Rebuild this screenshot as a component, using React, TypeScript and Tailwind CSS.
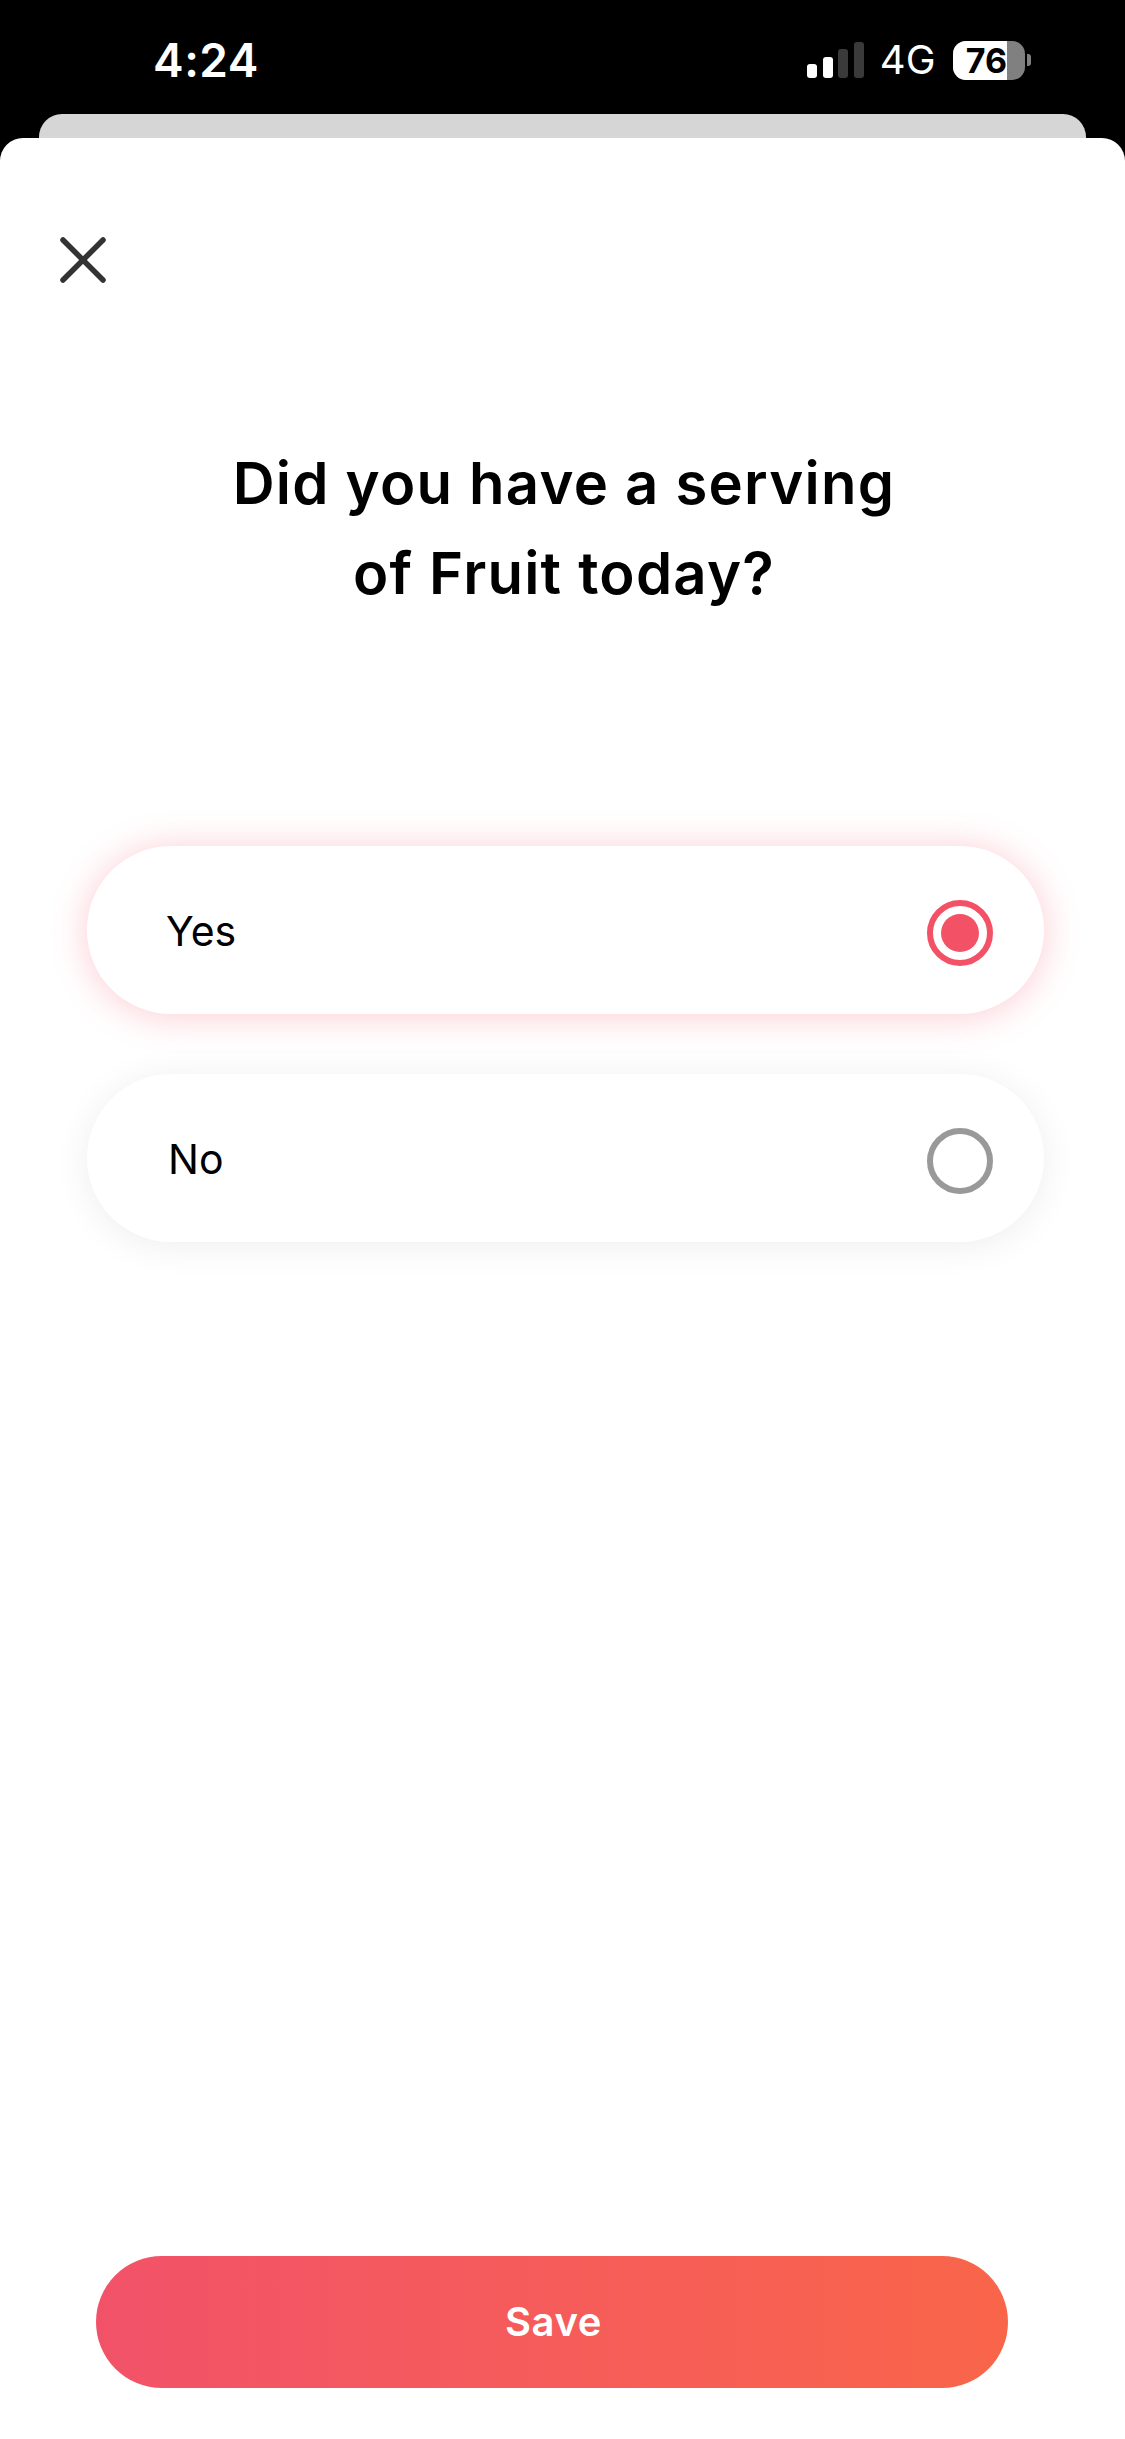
import React from "react";

function Option({ label, selected, textPad }: { label: string; selected: boolean; textPad: string }) {
  return (
    <div
      className={`flex h-[168px] items-center justify-between rounded-[84px] bg-white pr-[51px] ${textPad} ${
        selected ? "shadow-[0_2px_36px_rgba(244,82,102,0.3)]" : "shadow-[0_4px_36px_rgba(0,0,0,0.07)]"
      }`}
    >
      <span className="pt-[2px] text-[41px] leading-[50px] font-normal text-black">{label}</span>
      <span
        className={`flex h-[66px] w-[66px] translate-y-[3px] items-center justify-center rounded-full border-[6px] ${
          selected ? "border-[#f35166]" : "border-[#999999]"
        }`}
      >
        {selected && <span className="h-[38px] w-[38px] rounded-full bg-[#f35166]" />}
      </span>
    </div>
  );
}

export default function App() {
  return (
    <div className="flex h-[2439px] w-[1125px] flex-col overflow-hidden bg-black font-['Inter',sans-serif]">
      {/* Status bar */}
      <div className="flex h-[114px] shrink-0 items-start justify-between pl-[153px] pr-[94px] pt-[32px]">
        <span className="text-[46px] leading-[56px] font-semibold tracking-[0.5px] text-white">4:24</span>
        <div className="flex items-center pt-[8px]">
          <div className="flex h-[36px] items-end gap-[5.5px]">
            <span className="h-[14px] w-[10px] rounded-[3px] bg-white" />
            <span className="h-[21px] w-[10px] rounded-[3px] bg-white" />
            <span className="h-[29px] w-[10px] rounded-[3px] bg-[#3a3a3a]" />
            <span className="h-[36px] w-[10px] rounded-[3px] bg-[#3a3a3a]" />
          </div>
          <span className="ml-[16px] text-[40px] leading-[40px] font-normal text-white">4G</span>
          <div className="ml-[17.5px] flex h-[39px] w-[72px] overflow-hidden rounded-[13px] bg-[#808080]">
            <div className="flex h-full w-[54px] items-center justify-end overflow-hidden bg-white">
              <span className="text-[34px] leading-[39px] font-bold text-black">76</span>
            </div>
          </div>
          <span className="ml-[2px] h-[12px] w-[4px] rounded-r-[3px] bg-[#808080]" />
        </div>
      </div>

      {/* Sheet behind */}
      <div className="mx-[39px] h-[24px] shrink-0 rounded-t-[23px] bg-[#d6d6d6]" />

      {/* Sheet */}
      <div className="flex flex-1 flex-col rounded-t-[23px] bg-white">
        <div className="pl-[60px] pt-[99px]">
          <svg width="46" height="46" viewBox="0 0 46 46" fill="none" stroke="#333333" strokeWidth="5.5" strokeLinecap="round">
            <path d="M3 3L43 43" />
            <path d="M43 3L3 43" />
          </svg>
        </div>

        <h1 className="mt-[155px] pl-[3px] text-center text-[58px] leading-[90px] font-semibold tracking-[1.25px] text-black">
          Did you have a serving
          <br />
          of Fruit today?
        </h1>

        <div className="mt-[228px] flex flex-col gap-[60px] pl-[87px] pr-[81px]">
          <Option label="Yes" selected textPad="pl-[79px]" />
          <Option label="No" selected={false} textPad="pl-[81px]" />
        </div>

        <div className="mt-auto pb-[51px] pl-[96px] pr-[117px]">
          <button className="flex h-[132px] w-full items-center justify-center rounded-[66px] bg-gradient-to-r from-[#f25268] to-[#f96549] pl-[3px] text-[40px] leading-[46px] font-semibold tracking-[0.6px] text-white">
            Save
          </button>
        </div>
      </div>
    </div>
  );
}
